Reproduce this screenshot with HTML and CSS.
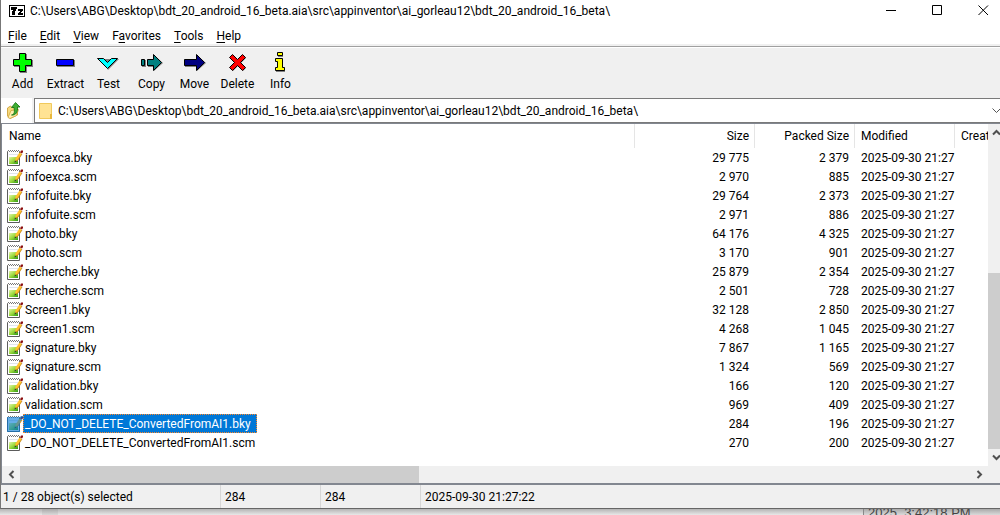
FILE: index.html
```html
<!DOCTYPE html>
<html lang="en">
<head>
    <meta charset="utf-8"/>
    <meta name="viewport" content="width=device-width, initial-scale=1"/>
    <title>7-Zip</title>
    <link rel="stylesheet" href="styles.css">
</head>

<body>

<!-- SHARED ICONS -->
<svg class="symbols" aria-hidden="true">
    <defs>
        <linearGradient id="green" x1="0" y1="0" x2="1" y2="1">
            <stop offset="0" stop-color="#e2f5a8"/>
            <stop offset="0.5" stop-color="#9ad93c"/>
            <stop offset="1" stop-color="#2a9a10"/>
        </linearGradient>
    </defs>
    <symbol id="icon-file" viewBox="0 0 16 16">
        <path d="M0.500 1.500H12.500V15.500H0.500Z" fill="#fff" stroke="#5c5c5c"/>
        <path d="M1 1.500H12" stroke="#fff"/>
        <path d="M1 0.500H12M2 1.500H12" stroke="#777" stroke-dasharray="1 1"/>
        <path d="M2 4.500H11" stroke="#e0e6ee"/>
        <path d="M2 7H11V14H2Z" fill="url(#green)"/>
        <path d="M8 11.500L8.500 8.500L12.500 2.500L15 4L11 10Z" fill="#ffc02c"/>
        <path d="M8 11.500L11 10L15 4" fill="none" stroke="#b87400" stroke-width="0.7"/>
        <path d="M7.500 12.500L8 10.500L9.500 11.500Z" fill="#333"/>
        <path d="M13 2.500L14 0.500H16V2L15 3.500Z" fill="#8c1010"/>
    </symbol>
</svg>

<div class="window">
    <header class="title">
        <svg class="title__logo" width="16" height="12" viewBox="0 0 16 12" shape-rendering="crispEdges">
            <path d="M0 0H16V12H0Z"/>
            <path d="M1 1H15V11H1Z" fill="#fff"/>
            <path d="M2 2H8V4H7V6H6V10H3V6H4V5H2ZM9 4H14V6H13V7H12V8H14V10H9V8H10V7H11V6H9Z"/>
        </svg>
        <span class="title__text">C:\Users\ABG\Desktop\bdt_20_android_16_beta.aia\src\appinventor\ai_gorleau12\bdt_20_android_16_beta\</span>
        <button class="title__button" aria-label="Minimize">
            <svg width="11" height="11"><path d="M0 5.500H10"/></svg>
        </button>
        <button class="title__button" aria-label="Maximize">
            <svg width="11" height="11"><path d="M0.500 0.500H9.500V9.500H0.500Z"/></svg>
        </button>
        <button class="title__button" aria-label="Close">
            <svg width="11" height="11"><path d="M0.500 0.500L10 10M10 0.500L0.500 10"/></svg>
        </button>
    </header>

    <nav class="menu">
        <button><u>F</u>ile</button>
        <button><u>E</u>dit</button>
        <button><u>V</u>iew</button>
        <button>F<u>a</u>vorites</button>
        <button><u>T</u>ools</button>
        <button><u>H</u>elp</button>
    </nav>

    <div class="toolbar">
        <button class="tool">
            <svg class="tool__icon" width="25" height="24">
                <path class="tool__shadow" d="M10 4H17V10H23V17H17V23H10V17H4V10H10Z"/>
                <path d="M9.500 3.500H15.500V9.500H21.500V15.500H15.500V21.500H9.500V15.500H3.500V9.500H9.500Z" fill="#0f0"/>
            </svg>
            Add
        </button>
        <button class="tool">
            <svg class="tool__icon" width="25" height="24">
                <path class="tool__shadow" d="M4 10H22V17H4Z"/>
                <path d="M3.500 9.500H20.500V15.500H3.500Z" fill="#00f"/>
            </svg>
            Extract
        </button>
        <button class="tool">
            <svg class="tool__icon" width="25" height="24">
                <path class="tool__shadow" d="M7 9H23L12 20Z"/>
                <path d="M1.500 8.500H7.500L11.500 12.500L15.500 8.500H21.500L11.500 18.500Z" fill="#0ff"/>
            </svg>
            Test
        </button>
        <button class="tool">
            <svg class="tool__icon" width="25" height="24">
                <path class="tool__shadow" d="M3 10H7V17H3ZM9 10H15V5L24 13L15 21V17H9Z"/>
                <path d="M2.500 9.500H5.500V15.500H2.500ZM8.500 9.500H14.500V4.500L22.500 12.500L14.500 20.500V15.500H8.500Z" fill="#008080"/>
            </svg>
            Copy
        </button>
        <button class="tool">
            <svg class="tool__icon" width="25" height="24">
                <path class="tool__shadow" d="M3 10H15V5L24 13L15 21V17H3Z"/>
                <path d="M2.500 9.500H14.500V4.500L22.500 12.500L14.500 20.500V15.500H2.500Z" fill="#000080"/>
            </svg>
            Move
        </button>
        <button class="tool">
            <svg class="tool__icon" width="25" height="24">
                <path class="tool__shadow" d="M8 5L13 10L18 5L21 8L16 13L21 18L18 21L13 16L8 21L5 18L10 13L5 8Z"/>
                <path d="M7.500 4.500L12.500 9.500L17.500 4.500L20.500 7.500L15.500 12.500L20.500 17.500L17.500 20.500L12.500 15.500L7.500 20.500L4.500 17.500L9.500 12.500L4.500 7.500Z" fill="#f00"/>
            </svg>
            Delete
        </button>
        <button class="tool">
            <svg class="tool__icon" width="25" height="24">
                <path class="tool__shadow" d="M10 3H15V7H10ZM8 9H15V18H17V22H8V18H10V12H8Z"/>
                <path d="M9.500 2.500H14.500V5.500H9.500ZM7.500 8.500H14.500V17.500H16.500V20.500H7.500V17.500H9.500V11.500H7.500Z" fill="#ff0"/>
            </svg>
            Info
        </button>
    </div>

    <div class="address">
        <button class="address__up" aria-label="Up one level">
            <svg width="14" height="17" viewBox="0 0 14 17">
                <path d="M0.500 6L3.500 4L5 5.500L10.500 5V13L3 16.500L0.500 14Z" fill="#f7d97c" stroke="#c99a2c" stroke-width="0.8"/>
                <path d="M1 15.500L4 8.500L11.500 7.500L9.500 13.500L3 16.500Z" fill="#fff0b0" stroke="#d0a43a" stroke-width="0.8"/>
                <path d="M4.500 13C8 12.500 7.500 9 7 5.500H4.500L8.500 0.500L13 5H10.500C11 10 9 13.500 4.500 13Z" fill="#3fae33" stroke="#12700f" stroke-width="0.8"/>
            </svg>
        </button>
        <label class="address__field">
            <svg width="13" height="16" viewBox="0 0 13 16">
                <path d="M0.500 0.500H12.500V15.500H0.500Z" fill="#ffe394" stroke="#f0c95c"/>
                <path d="M11 11H13V16H11Z" fill="#e9b83c"/>
            </svg>
            <input class="address__input" type="text" aria-label="Path"
                   value="C:\Users\ABG\Desktop\bdt_20_android_16_beta.aia\src\appinventor\ai_gorleau12\bdt_20_android_16_beta\">
            <svg width="8" height="6"><path d="M0.500 0.500L4.500 4.500L8.500 0.500" fill="none" stroke="#555"/></svg>
        </label>
    </div>

    <main class="panel">
        <div class="files">
            <table class="files__table">
                <colgroup>
                    <col class="col_name">
                    <col class="col_size">
                    <col class="col_packed">
                    <col class="col_modified">
                    <col class="col_created">
                </colgroup>
                <thead>
                <tr><th>Name</th><th class="num">Size</th><th class="num">Packed Size</th><th>Modified</th><th>Created</th></tr>
                </thead>
                <tbody>
                <tr><td><svg class="file_icon"><use href="#icon-file"/></svg><span class="file_name">infoexca.bky</span></td><td class="num">29 775</td><td class="num">2 379</td><td>2025-09-30 21:27</td><td></td></tr>
                <tr><td><svg class="file_icon"><use href="#icon-file"/></svg><span class="file_name">infoexca.scm</span></td><td class="num">2 970</td><td class="num">885</td><td>2025-09-30 21:27</td><td></td></tr>
                <tr><td><svg class="file_icon"><use href="#icon-file"/></svg><span class="file_name">infofuite.bky</span></td><td class="num">29 764</td><td class="num">2 373</td><td>2025-09-30 21:27</td><td></td></tr>
                <tr><td><svg class="file_icon"><use href="#icon-file"/></svg><span class="file_name">infofuite.scm</span></td><td class="num">2 971</td><td class="num">886</td><td>2025-09-30 21:27</td><td></td></tr>
                <tr><td><svg class="file_icon"><use href="#icon-file"/></svg><span class="file_name">photo.bky</span></td><td class="num">64 176</td><td class="num">4 325</td><td>2025-09-30 21:27</td><td></td></tr>
                <tr><td><svg class="file_icon"><use href="#icon-file"/></svg><span class="file_name">photo.scm</span></td><td class="num">3 170</td><td class="num">901</td><td>2025-09-30 21:27</td><td></td></tr>
                <tr><td><svg class="file_icon"><use href="#icon-file"/></svg><span class="file_name">recherche.bky</span></td><td class="num">25 879</td><td class="num">2 354</td><td>2025-09-30 21:27</td><td></td></tr>
                <tr><td><svg class="file_icon"><use href="#icon-file"/></svg><span class="file_name">recherche.scm</span></td><td class="num">2 501</td><td class="num">728</td><td>2025-09-30 21:27</td><td></td></tr>
                <tr><td><svg class="file_icon"><use href="#icon-file"/></svg><span class="file_name">Screen1.bky</span></td><td class="num">32 128</td><td class="num">2 850</td><td>2025-09-30 21:27</td><td></td></tr>
                <tr><td><svg class="file_icon"><use href="#icon-file"/></svg><span class="file_name">Screen1.scm</span></td><td class="num">4 268</td><td class="num">1 045</td><td>2025-09-30 21:27</td><td></td></tr>
                <tr><td><svg class="file_icon"><use href="#icon-file"/></svg><span class="file_name">signature.bky</span></td><td class="num">7 867</td><td class="num">1 165</td><td>2025-09-30 21:27</td><td></td></tr>
                <tr><td><svg class="file_icon"><use href="#icon-file"/></svg><span class="file_name">signature.scm</span></td><td class="num">1 324</td><td class="num">569</td><td>2025-09-30 21:27</td><td></td></tr>
                <tr><td><svg class="file_icon"><use href="#icon-file"/></svg><span class="file_name">validation.bky</span></td><td class="num">166</td><td class="num">120</td><td>2025-09-30 21:27</td><td></td></tr>
                <tr><td><svg class="file_icon"><use href="#icon-file"/></svg><span class="file_name">validation.scm</span></td><td class="num">969</td><td class="num">409</td><td>2025-09-30 21:27</td><td></td></tr>
                <tr class="selected"><td><svg class="file_icon"><use href="#icon-file"/><path d="M0 1H13L14 0H16V2L13 6V16H0Z" fill="#0078d7" fill-opacity="0.6"/></svg><span class="file_name">_DO_NOT_DELETE_ConvertedFromAI1.bky</span></td><td class="num">284</td><td class="num">196</td><td>2025-09-30 21:27</td><td></td></tr>
                <tr><td><svg class="file_icon"><use href="#icon-file"/></svg><span class="file_name">_DO_NOT_DELETE_ConvertedFromAI1.scm</span></td><td class="num">270</td><td class="num">200</td><td>2025-09-30 21:27</td><td></td></tr>
                </tbody>
            </table>
        </div>
        <div class="vscroll">
            <button class="scroll_arrow" aria-label="Scroll up"><svg width="9" height="7"><path d="M1 5.500L4.500 2L8 5.500"/></svg></button>
            <div class="vscroll__track"><div class="vscroll__thumb"></div></div>
            <button class="scroll_arrow" aria-label="Scroll down"><svg width="9" height="7"><path d="M1 1.500L4.500 5L8 1.500"/></svg></button>
        </div>
        <div class="hscroll">
            <button class="scroll_arrow" aria-label="Scroll left"><svg width="7" height="9"><path d="M5.500 1L2 4.500L5.500 8"/></svg></button>
            <div class="hscroll__track"><div class="hscroll__thumb"></div></div>
            <button class="scroll_arrow" aria-label="Scroll right"><svg width="7" height="9"><path d="M1.500 1L5 4.500L1.500 8"/></svg></button>
        </div>
    </main>

    <footer class="status">
        <span class="status__count">1 / 28 object(s) selected</span>
        <span class="status__cell">284</span>
        <span class="status__cell">284</span>
        <span class="status__cell status__cell--last">2025-09-30 21:27:22</span>
    </footer>
</div>

<!-- WINDOW WHICH SITS BEHIND -->
<div class="behind">
    <div class="behind__gutter"></div>
    <div class="behind__time">2025, 3:42:18 PM</div>
</div>

</body>
</html>
```
FILE: styles.css
```css
* {
    box-sizing: border-box;
}

html {
    height: 100%;
}

body {
    height: 100%;
    margin: 0;
    overflow: hidden;
    background-color: #e6e6e6;
    font: 12px/16px Roboto, "Open Sans", sans-serif;
    color: #000;

    display: flex;
    flex-direction: column;
}

button {
    padding: 0;
    border: 0;
    background: none;
    font: inherit;
    color: inherit;
}

svg {
    display: block;
    flex: none;
}

.symbols {
    position: absolute;
    width: 0;
    height: 0;
}

.window {
    flex: 1;
    min-height: 0;
    display: flex;
    flex-direction: column;
    background-color: #fff;
    border-left: 1px solid #777;
    border-bottom: 1px solid #666;
}

/* title bar */
.title {
    flex: none;
    height: 21px;
    padding-left: 8px;
    display: flex;
    align-items: center;
}

.title__text {
    flex: 1;
    margin-left: 5px;
    white-space: nowrap;
}

.title__button {
    width: 46px;
    height: 20px;
    display: flex;
    align-items: center;
    justify-content: center;
}

.title__button:last-child {
    margin-right: -6px;
}

.title__button svg {
    fill: none;
    stroke: #000;
}

/* menu */
.menu {
    flex: none;
    height: 26px;
    padding: 5px 0 0 7px;
    border-bottom: 1px solid #a0a0a0;
    box-shadow: inset 0 -2px #f0f0f0;
    display: flex;
    align-items: flex-start;
    gap: 13px;
    line-height: 20px;
}

.menu u {
    text-underline-offset: 2px;
}

/* toolbar */
.toolbar {
    flex: none;
    height: 51px;
    padding-top: 2px;
    border-top: 1px solid #fff;
    background-color: #f0f0f0;
    display: flex;
}

.tool {
    width: 43px;
    display: flex;
    flex-direction: column;
    align-items: center;
    gap: 2px;
}

.tool__icon path {
    stroke: #000;
}

.tool__icon .tool__shadow {
    fill: #808080;
    stroke: none;
}

/* address bar */
.address {
    flex: none;
    height: 25px;
    display: flex;
    background-color: #f0f0f0;
}

.address__up {
    width: 31px;
    padding-left: 6px;
    background-color: #fff;
}

.address__field {
    flex: 1;
    margin-left: 2px;
    padding-left: 4px;
    border: 1px solid #7a7a7a;
    border-right: 0;
    background-color: #fff;
    display: flex;
    align-items: center;
}

.address__input {
    flex: 1;
    min-width: 0;
    padding: 0 0 0 6px;
    border: 0;
    outline: 0;
    font: inherit;
}

/* file list */
.panel {
    flex: 1;
    min-height: 0;
    border-top: 1px solid #828790;
    border-left: 1px solid #828790;
    border-bottom: 2px solid #828790;
    display: grid;
    grid-template-columns: minmax(0, 1fr) 12px;
    grid-template-rows: minmax(0, 1fr) 17px;
}

.files {
    overflow: hidden;
}

.files__table {
    width: 100%;
    table-layout: fixed;
    border-collapse: separate;
    border-spacing: 0;
}

.col_packed,
.col_modified {
    width: 100px;
}

.col_size {
    width: 120px;
}

.col_created {
    width: 33px;
}

.files th {
    height: 24px;
    padding: 0 5px 0 6px;
    border-right: 1px solid #e5e5e5;
    font-weight: normal;
    text-align: left;
    white-space: nowrap;
    overflow: hidden;
}

.files th:first-child {
    padding-left: 7px;
}

.files th:last-child {
    padding-right: 0;
    border-right: 0;
}

.files td {
    height: 19px;
    padding: 2px 0 0 6px;
    line-height: 17px;
    white-space: nowrap;
}

.files td:first-child {
    padding: 0 0 0 5px;
    display: flex;
    align-items: center;
}

.files .num {
    padding-right: 5px;
    text-align: right;
}

.files td.num {
    padding-right: 6px;
}

.file_icon {
    width: 16px;
    height: 16px;
}

.file_name {
    padding: 2px 5px 0 1px;
    border: 1px solid transparent;
    line-height: 15px;
}

.selected .file_name {
    border: 1px dotted #ff8728;
    background-color: #0078d7;
    color: #fff;
}

/* scroll bars */
.scroll_arrow {
    flex: none;
    width: 17px;
    height: 17px;
    display: flex;
    align-items: center;
    justify-content: center;
}

.scroll_arrow path {
    fill: none;
    stroke: #505050;
    stroke-width: 2;
}

.vscroll {
    grid-row: 1 / 3;
    grid-column: 2;
    padding-bottom: 17px;
    overflow: hidden;
    background-color: #f0f0f0;
    display: flex;
    flex-direction: column;
}

.vscroll__track {
    flex: 1;
    display: flex;
    flex-direction: column;
    justify-content: flex-end;
}

.vscroll__thumb {
    height: 57%;
    background-color: #cdcdcd;
}

.hscroll {
    grid-row: 2;
    grid-column: 1;
    padding-left: 1px;
    background-color: #f0f0f0;
    display: flex;
}

.hscroll__track {
    flex: 1;
}

.hscroll__thumb {
    width: 42%;
    height: 100%;
    background-color: #cdcdcd;
}

/* status bar */
.status {
    flex: none;
    height: 23px;
    background-color: #f0f0f0;
    line-height: 24px;
    display: flex;
}

.status__count {
    width: 219px;
    padding-left: 2px;
}

.status__cell {
    width: 100px;
    padding-left: 4px;
    border-left: 1px solid #d7d7d7;
}

.status__cell--last {
    flex: 1;
}

/* window behind */
.behind {
    flex: none;
    height: 6px;
    overflow: hidden;
    background-image: linear-gradient(#b4b4b4, #e8e8e8);
    display: flex;
    justify-content: space-between;
}

.behind__gutter {
    width: 16px;
    margin-left: 42px;
    background-color: rgba(0, 0, 0, 0.06);
}

.behind__time {
    width: 137px;
    padding-left: 4px;
    border-left: 1px solid #888;
    background-color: rgba(0, 0, 0, 0.06);
    font: 13px/8px "Liberation Sans", sans-serif;
    color: #444;
}
```
